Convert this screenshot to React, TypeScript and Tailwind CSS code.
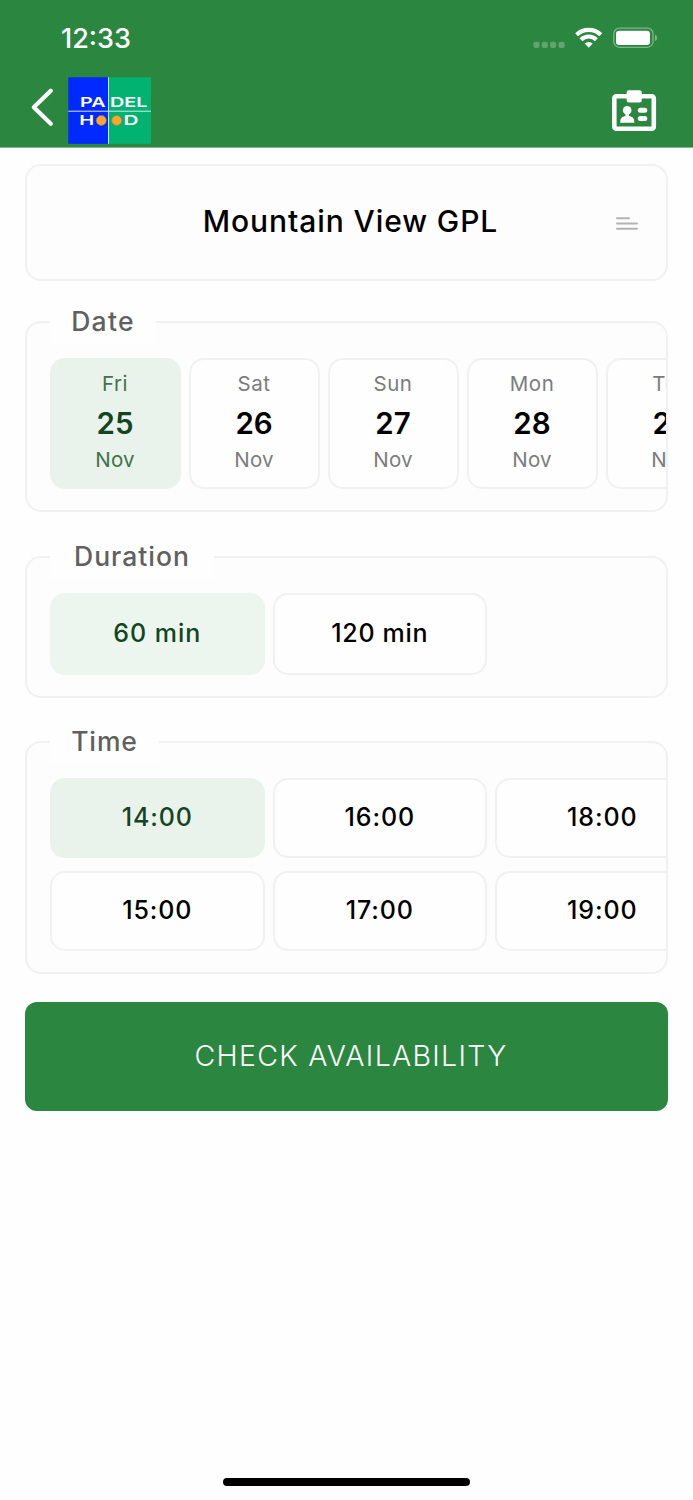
import type { ReactNode } from "react";

const days = [
  { day: "Fri", date: "25", tracking: "tracking-[0.5px]" },
  { day: "Sat", date: "26", tracking: "tracking-[0.6px]" },
  { day: "Sun", date: "27", tracking: "tracking-[0.5px]" },
  { day: "Mon", date: "28", tracking: "tracking-[0.6px]" },
  { day: "Tue", date: "29", tracking: "tracking-[0.6px]" },
];

const times = [
  ["14:00", "16:00", "18:00"],
  ["15:00", "17:00", "19:00"],
];

function Logo() {
  return (
    <svg className="mt-[77px] ml-[15px] h-[67px] w-[83px]" viewBox="0 0 83 67">
      <rect x="0.3" y="0.3" width="40.2" height="66.5" fill="#0229ff" />
      <rect x="40" y="0.3" width="43" height="66.5" fill="#02b271" />
      <path d="M40.5 0.3V66.8M0.3 34.2H83" stroke="#d5e6f5" strokeWidth="1" />
      <g fill="#fff" fontFamily="Inter, sans-serif" fontSize="13" fontWeight="600">
        <text x="12" y="30" textLength="25.5" lengthAdjust="spacingAndGlyphs">PA</text>
        <text x="42" y="30" textLength="37.5" lengthAdjust="spacingAndGlyphs">DEL</text>
        <text x="11.2" y="48.3" textLength="15" lengthAdjust="spacingAndGlyphs">H</text>
        <text x="55.5" y="48.3" textLength="15" lengthAdjust="spacingAndGlyphs">D</text>
      </g>
      <circle cx="33.3" cy="43.5" r="5" fill="#ffa42e" stroke="#a77442" strokeWidth="0.6" />
      <circle cx="48.7" cy="43.5" r="5" fill="#ffa42e" stroke="#8a8a3e" strokeWidth="0.6" />
    </svg>
  );
}

function Header() {
  return (
    <header className="relative flex h-[148px] items-start border-b border-[#82b68c] bg-[#2b863f]">
      <svg className="mt-[86px] ml-[30px] h-11 w-6" viewBox="0 0 24 44" fill="none">
        <path d="M20.8 4.8 3.8 21.3 20.8 37.8" stroke="#fff" strokeWidth="4.2" strokeLinecap="round" strokeLinejoin="round" />
      </svg>
      <div className="-ml-px"><Logo /></div>
      <svg className="mt-[88px] mr-[36px] ml-auto h-11 w-[46px]" viewBox="0 0 46 44">
        <rect x="3.3" y="8.3" width="39.5" height="32.4" rx="2" fill="none" stroke="#fff" strokeWidth="4.6" />
        <rect x="15.7" y="2.3" width="15" height="12.3" rx="2" fill="#fff" />
        <circle cx="16.2" cy="22.3" r="4.3" fill="#fff" />
        <path d="M14.5 25h3.4v2.8l3.4 1.4q2 .8 2 5.6H9.2q0-4.8 2-5.6l3.3-1.4z" fill="#fff" />
        <rect x="26.8" y="19.8" width="9.5" height="5" rx="2.5" fill="#fff" />
        <rect x="26.8" y="27.9" width="9.5" height="5" rx="2.5" fill="#fff" />
      </svg>
      <div className="absolute top-0 right-0 left-0 flex h-[76px] items-center justify-between pr-[35px] pl-[61px]">
        <span className="pt-px text-[27px] leading-[76px] font-medium tracking-[0px] text-white">12:33</span>
        <svg className="h-6 w-[126px]" viewBox="0 0 126 24">
          <g fill="#60a56f">
            <rect x="1.4" y="15.8" width="6.2" height="6.2" rx="2.3" />
            <rect x="9.7" y="15.8" width="6.2" height="6.2" rx="2.3" />
            <rect x="18" y="15.8" width="6.2" height="6.2" rx="2.3" />
            <rect x="26.5" y="15.8" width="6.2" height="6.2" rx="2.3" />
          </g>
          <g fill="none" stroke="#fff" strokeWidth="4.1">
            <path d="M44.6 8.8a17.4 17.4 0 0 1 24.2 0" />
            <path d="M49 13.7a11 11 0 0 1 15.4 0" />
          </g>
          <path d="M56.7 21.8 52.7 17.6a5.8 5.8 0 0 1 8 0z" fill="#fff" />
          <rect x="81.8" y="2.1" width="39.2" height="19.2" rx="5.6" fill="none" stroke="#80b68c" strokeWidth="1.3" />
          <rect x="84" y="4.7" width="34" height="14.3" rx="3.2" fill="#fff" />
          <path d="M123 8.5q2.1.8 2.1 3.4T123 15.3z" fill="#80b68c" />
        </svg>
      </div>
    </header>
  );
}

function Section({ title, legend, className, children }: { title: string; legend: string; className: string; children: ReactNode }) {
  return (
    <section className={`relative w-[643px] rounded-[16px] border-2 border-[#f1f1f1] bg-[#fdfdfd] ${className}`}>
      <h2 className={`absolute -top-[23px] left-[23px] h-[44px] bg-[#fefefe] text-center text-[26.5px] leading-[43px] font-medium text-[#606060] ${legend}`}>
        {title}
      </h2>
      {children}
    </section>
  );
}

function Slot({ label, selected, className }: { label: string; selected?: boolean; className: string }) {
  return (
    <button
      className={`w-[214.5px] shrink-0 rounded-[15px] border-2 text-center ${className} ${
        selected ? "text-[#134620]" : "border-[#f1f1f1] bg-[#fefefe] text-black"
      }`}
    >
      {label}
    </button>
  );
}

export default function App() {
  return (
    <div className="flex h-[1500px] w-[693px] flex-col overflow-hidden bg-[#fefefe] font-['Inter',sans-serif]">
      <Header />
      <main className="flex flex-col items-start pt-4 pl-[25px]">
        <section className="flex h-[117px] w-[643px] items-center rounded-[16px] border-2 border-[#f1f1f1] bg-[#fdfdfd]">
          <h1 className="w-[589px] pb-[3px] pl-[58px] text-center text-[30px] leading-[40px] font-medium tracking-[0.9px] text-black">
            Mountain View GPL
          </h1>
          <svg className="mt-[3px] -ml-px h-4 w-6" viewBox="0 0 24 16" fill="none" stroke="#b4b4b4" strokeWidth="2" strokeLinecap="round">
            <path d="M2 2.2h12M2 7.6h20M2 12.8h20" />
          </svg>
        </section>

        <Section title="Date" legend="w-[106px] tracking-[1.3px]" className="mt-10 h-[191px]">
          <div className="flex h-full gap-2 overflow-hidden pt-[35px] pl-[23px]">
            {days.map(({ day, date, tracking }, i) => (
              <button
                key={date}
                className={`flex h-[131px] w-[131px] shrink-0 flex-col items-center rounded-[15px] border-2 pt-[12px] pr-px ${
                  i === 0 ? "border-[#e9f2eb] bg-[#e9f2eb] text-[#417249]" : "border-[#f1f1f1] bg-[#fefefe] text-[#7c7c7c]"
                }`}
              >
                <span className={`text-[20.5px] leading-6 font-[370] ${tracking}`}>{day}</span>
                <span className={`mt-[7px] text-[29.5px] leading-[40px] font-semibold ${i === 0 ? "text-[#134620]" : "text-black"}`}>{date}</span>
                <span className="mt-[5px] text-[20.5px] leading-6 font-[370] tracking-[0.2px]">Nov</span>
              </button>
            ))}
          </div>
        </Section>

        <Section title="Duration" legend="w-[164px] tracking-[1px]" className="mt-[44px] h-[142px]">
          <div className="flex gap-2 pt-[35px] pl-[23px]">
            <Slot label="60 min" selected className="h-[82px] border-[#ecf5ee] bg-[#ecf5ee] text-[25px] font-medium tracking-[1px]" />
            <Slot label="120 min" className="h-[82px] text-[25px] font-medium tracking-[0.7px]" />
          </div>
        </Section>

        <Section title="Time" legend="w-[109px] tracking-[0.9px]" className="mt-[43px] h-[233px]">
          <div className="flex h-full flex-col gap-[13px] overflow-hidden pt-[35px] pl-[23px]">
            {times.map((row, r) => (
              <div key={r} className="flex gap-2">
                {row.map((t, c) => (
                  <Slot
                    key={t}
                    label={t}
                    selected={r === 0 && c === 0}
                    className={`h-[80px] pb-px text-[25px] font-medium tracking-[0.9px] ${r === 0 && c === 0 ? "border-[#e9f2eb] bg-[#e9f2eb]" : ""}`}
                  />
                ))}
              </div>
            ))}
          </div>
        </Section>

        <button className="mt-[28px] h-[109px] w-[643px] rounded-[12px] bg-[#2b863f] pl-[9px] text-center text-[28.5px] font-light tracking-[1.3px] text-white">
          CHECK AVAILABILITY
        </button>
      </main>
      <div className="mx-auto mt-auto mb-[14px] h-2 w-[247px] rounded-full bg-black" />
    </div>
  );
}
